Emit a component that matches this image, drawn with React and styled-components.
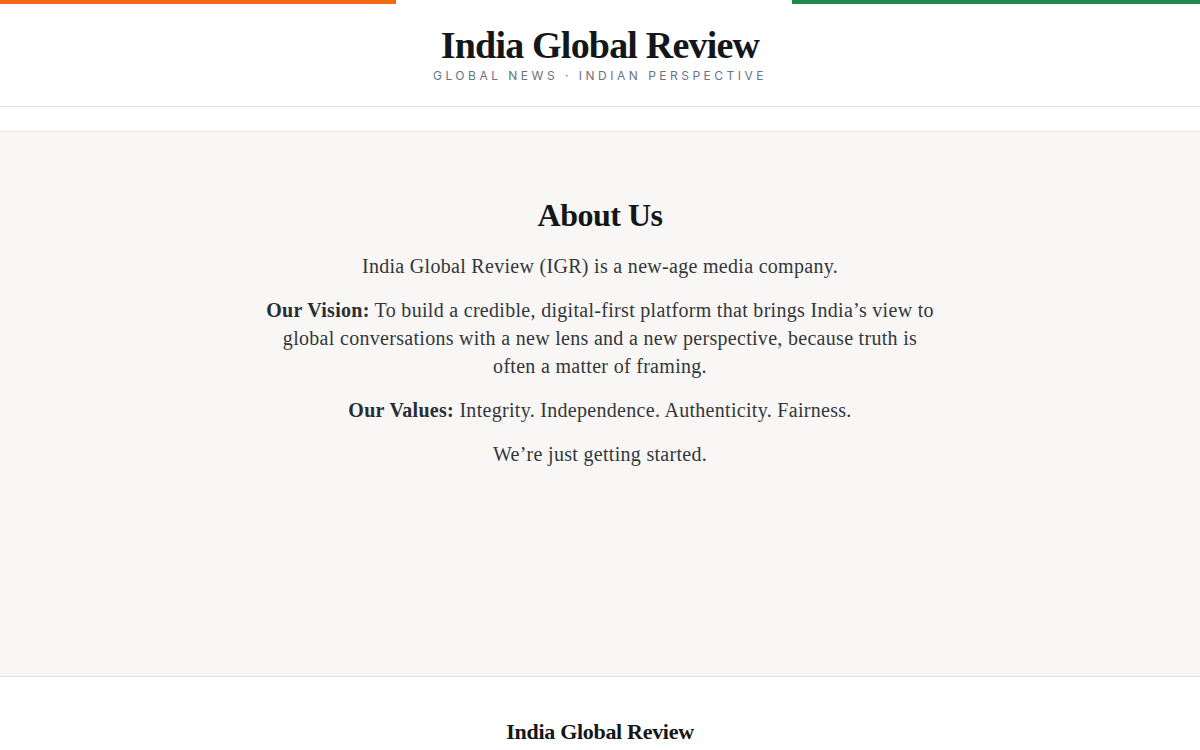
import React from 'react';
import styled, { createGlobalStyle } from 'styled-components';

const GlobalStyle = createGlobalStyle`
    * {
        box-sizing: border-box;
    }

    body {
        margin: 0;
        background: #ffffff;
        color: #1f2328;
        font-family: 'Liberation Serif', 'DejaVu Serif', serif;
    }
`

const TricolourBar = styled.div`
    display: grid;
    grid-template-columns: 33% 33% 1fr;
    height: 4px;
`

const Stripe = styled.div`
    background: ${props => props.color};
`

const Masthead = styled.header`
    display: flex;
    flex-direction: column;
    align-items: center;
    padding: 21px 0 23px;
    border-bottom: 1px solid #e2e2e2;
`

const Brand = styled.h1`
    margin: 0;
    font-family: 'Liberation Serif', serif;
    font-size: 38px;
    font-weight: 700;
    line-height: 40px;
    letter-spacing: -0.8px;
    color: #14171a;
`

const Tagline = styled.div`
    margin-top: 4px;
    font-family: Inter, 'Liberation Sans', sans-serif;
    font-size: 12px;
    line-height: 14px;
    letter-spacing: 3.5px;
    color: #6b7280;
    text-transform: uppercase;
`

const NavStrip = styled.nav`
    height: 25px;
    border-bottom: 1px solid #ece6e8;
`

const Main = styled.main`
    background: #f8f7f6;
    min-height: 544px;
    padding: 62px 20px 40px;
    display: flex;
    justify-content: center;
`

const Article = styled.article`
    max-width: 675px;
    text-align: center;
`

const Heading = styled.h2`
    margin: 0 0 16px;
    font-family: 'Liberation Serif', serif;
    font-size: 32px;
    font-weight: 700;
    line-height: 42px;
    letter-spacing: -0.5px;
    color: #14171a;
`

const Para = styled.p`
    margin: 0 0 16px;
    font-size: 20px;
    line-height: 28px;
    letter-spacing: 0.3px;
    color: #33363a;

    strong {
        font-weight: 700;
        color: #2a2d31;
    }
`

const Footer = styled.footer`
    border-top: 1px solid #e2e2e2;
    padding: 42px 0 0;
    display: flex;
    justify-content: center;
`

const FooterBrand = styled.div`
    font-family: 'Liberation Serif', serif;
    font-size: 22px;
    font-weight: 700;
    line-height: 26px;
    letter-spacing: -0.3px;
    color: #14171a;
`

const App = () => {
    return (
        <>
            <GlobalStyle />
            <TricolourBar>
                <Stripe color='#f26b12' />
                <Stripe color='#ffffff' />
                <Stripe color='#1f8a4c' />
            </TricolourBar>
            <Masthead>
                <Brand>India Global Review</Brand>
                <Tagline>Global News · Indian Perspective</Tagline>
            </Masthead>
            <NavStrip />
            <Main>
                <Article>
                    <Heading>About Us</Heading>
                    <Para>India Global Review (IGR) is a new-age media company.</Para>
                    <Para>
                        <strong>Our Vision:</strong> To build a credible, digital-first platform that brings India’s view to global conversations with a new lens and a new perspective, because truth is often a matter of framing.
                    </Para>
                    <Para>
                        <strong>Our Values:</strong> Integrity. Independence. Authenticity. Fairness.
                    </Para>
                    <Para>We’re just getting started.</Para>
                </Article>
            </Main>
            <Footer>
                <FooterBrand>India Global Review</FooterBrand>
            </Footer>
        </>
    )
};

export default App;
